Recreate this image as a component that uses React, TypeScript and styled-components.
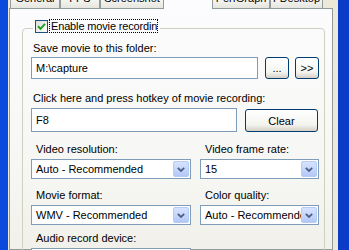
import styled, { createGlobalStyle } from "styled-components";

const GlobalStyle = createGlobalStyle`
  html, body {
    margin: 0;
    padding: 0;
  }
  body {
    width: 349px;
    height: 250px;
    overflow: hidden;
    background: #ECE9D8;
    font-family: "Liberation Sans", Arial, sans-serif;
    font-size: 11px;
    color: #000;
  }
`;

interface TabInfo {
  label: string;
  width: number;
  selected?: boolean;
}

const tabs: TabInfo[] = [
  { label: "General", width: 50 },
  { label: "FPS", width: 40 },
  { label: "Screenshot", width: 64 },
  { label: "Movie", width: 50, selected: true },
  { label: "PerfGraph", width: 58 },
  { label: "FDesktop", width: 53 },
];

function ChevronIcon() {
  return (
    <svg width="8" height="5" viewBox="0 0 8 5">
      <path d="M0.8 0.8 L4 4 L7.2 0.8" fill="none" stroke="#4D6185" strokeWidth="1.8" />
    </svg>
  );
}

function CheckMark() {
  return (
    <svg width="9" height="9" viewBox="0 0 9 9">
      <path d="M1 4.2 L3.5 6.8 L8 1.8" fill="none" stroke="#21A121" strokeWidth="2" />
    </svg>
  );
}

function Combo({ value }: { value: string }) {
  return (
    <ComboBox>
      <ComboValue>{value}</ComboValue>
      <ComboButton>
        <ChevronIcon />
      </ComboButton>
    </ComboBox>
  );
}

export default function App() {
  return (
    <>
      <GlobalStyle />
      <Window>
        <Face>
          <TabStrip>
            {tabs.map((t) => (
              <Tab key={t.label} width={t.width} selected={t.selected}>
                {t.label}
              </Tab>
            ))}
          </TabStrip>
          <Panel>
            <GroupBox>
              <Legend>
                <CheckBox>
                  <CheckMark />
                </CheckBox>
                <FocusLabel>Enable movie recording</FocusLabel>
              </Legend>

              <Label top={9}>Save movie to this folder:</Label>
              <Row>
                <TextBox width={227}>M:\capture</TextBox>
                <SmallButton>...</SmallButton>
                <SmallButton>&gt;&gt;</SmallButton>
              </Row>

              <Label top={13}>Click here and press hotkey of movie recording:</Label>
              <Row>
                <TextBox width={206} tall>F8</TextBox>
                <ClearButton>Clear</ClearButton>
              </Row>

              <ComboGrid>
                <ComboLabel top={0}>Video resolution:</ComboLabel>
                <ComboLabel top={0}>Video frame rate:</ComboLabel>
                <Combo value="Auto - Recommended" />
                <Combo value="15" />
                <ComboLabel top={10}>Movie format:</ComboLabel>
                <ComboLabel top={10}>Color quality:</ComboLabel>
                <Combo value="WMV - Recommended" />
                <Combo value="Auto - Recommended" />
                <ComboLabel top={7}>Audio record device:</ComboLabel>
                <span />
                <Combo value="" />
              </ComboGrid>
            </GroupBox>
          </Panel>
        </Face>
      </Window>
    </>
  );
}

const Window = styled.div`
  display: flex;
  height: 250px;
  overflow: hidden;
  background: #ECE9D8;
  border-left: 8px solid #0A4BDD;
  border-right: 11px solid #0A3CC8;
  box-sizing: border-box;
`;

const Face = styled.div`
  flex: 1;
  display: flex;
  flex-direction: column;
  padding: 0 5px 0 1px;
  min-width: 0;
`;

const TabStrip = styled.div`
  display: flex;
  align-items: flex-end;
  height: 22px;
  margin-top: -14px;
  padding-left: 1px;
`;

const Tab = styled.div<{ width: number; selected?: boolean }>`
  box-sizing: border-box;
  width: ${({ width }) => width}px;
  height: ${({ selected }) => (selected ? 22 : 19)}px;
  margin: ${({ selected }) => (selected ? "0 -1px -1px -1px" : "0")};
  position: relative;
  z-index: ${({ selected }) => (selected ? 1 : 0)};
  border: 1px solid #919B9C;
  border-bottom: none;
  border-radius: 3px 3px 0 0;
  background: ${({ selected }) =>
    selected ? "#FCFCFE" : "linear-gradient(#FFFFFF, #F3F3EF 60%, #E6E5DF)"};
  text-align: center;
  line-height: ${({ selected }) => (selected ? 14 : 17)}px;
  white-space: nowrap;
  overflow: hidden;
`;

const Panel = styled.div`
  flex: 1;
  border: 1px solid #919B9C;
  background: linear-gradient(#FCFCFE, #F6F6F3 70%, #F1F0EA);
  padding: 19px 7px 0 12px;
  min-height: 0;
`;

const GroupBox = styled.div`
  border: 1px solid #D0D0BF;
  border-radius: 4px;
  padding: 0 5px 0 8px;
  height: 260px;
`;

const Legend = styled.div`
  display: flex;
  align-items: center;
  gap: 1px;
  width: fit-content;
  margin: -10px 0 0 2px;
  padding: 0 2px;
  height: 14px;
  background: #FCFCFE;
`;

const CheckBox = styled.div`
  box-sizing: border-box;
  width: 13px;
  height: 13px;
  border: 1px solid #1C5180;
  background: linear-gradient(135deg, #DCDCD7, #FFFFFF);
  display: flex;
  align-items: center;
  justify-content: center;
`;

const FocusLabel = styled.div`
  box-sizing: border-box;
  width: 109px;
  height: 14px;
  border: 1px dotted #000;
  padding: 0 0 0 1px;
  line-height: 12px;
  letter-spacing: -0.15px;
  white-space: nowrap;
  overflow: hidden;
`;

const Label = styled.div<{ top: number }>`
  line-height: 13px;
  margin: ${({ top }) => top}px 0 2px 2px;
  white-space: nowrap;
`;

const Row = styled.div`
  display: flex;
  align-items: center;
`;

const TextBox = styled.div<{ width: number; tall?: boolean }>`
  box-sizing: border-box;
  width: ${({ width }) => width}px;
  height: ${({ tall }) => (tall ? 24 : 22)}px;
  border: 1px solid #7F9DB9;
  background: #FFFFFF;
  padding-left: 4px;
  line-height: ${({ tall }) => (tall ? 22 : 20)}px;
`;

const SmallButton = styled.div`
  box-sizing: border-box;
  width: 24px;
  height: 22px;
  margin-left: 7px;
  border: 1px solid #003C74;
  border-radius: 3px;
  background: linear-gradient(#FFFFFF, #F4F4F0 70%, #D6D0C5);
  display: flex;
  align-items: center;
  justify-content: center;
  line-height: 1;
  & + & {
    margin-left: 6px;
  }
`;

const ClearButton = styled.div`
  box-sizing: border-box;
  width: 73px;
  height: 23px;
  margin: 2px 0 0 8px;
  border: 1px solid #003C74;
  border-radius: 3px;
  background: linear-gradient(#FFFFFF, #F4F4F0 70%, #D6D0C5);
  display: flex;
  align-items: center;
  justify-content: center;
`;

const ComboGrid = styled.div`
  display: grid;
  grid-template-columns: 160px 119px;
  column-gap: 9px;
  margin-top: 11px;
`;

const ComboLabel = styled.div<{ top: number }>`
  line-height: 13px;
  padding-left: 5px;
  margin: ${({ top }) => top}px 0 3px;
  white-space: nowrap;
`;

const ComboBox = styled.div`
  box-sizing: border-box;
  display: flex;
  height: 20px;
  border: 1px solid #7F9DB9;
  background: #FFFFFF;
  padding: 1px;
  min-width: 0;
`;

const ComboValue = styled.div`
  flex: 1;
  padding-left: 3px;
  line-height: 16px;
  white-space: nowrap;
  overflow: hidden;
`;

const ComboButton = styled.div`
  box-sizing: border-box;
  width: 16px;
  border: 1px solid #B7CBF8;
  border-radius: 2px;
  background: linear-gradient(#D6E3FE, #C2D4FB 60%, #B4C8F7);
  display: flex;
  align-items: center;
  justify-content: center;
`;
